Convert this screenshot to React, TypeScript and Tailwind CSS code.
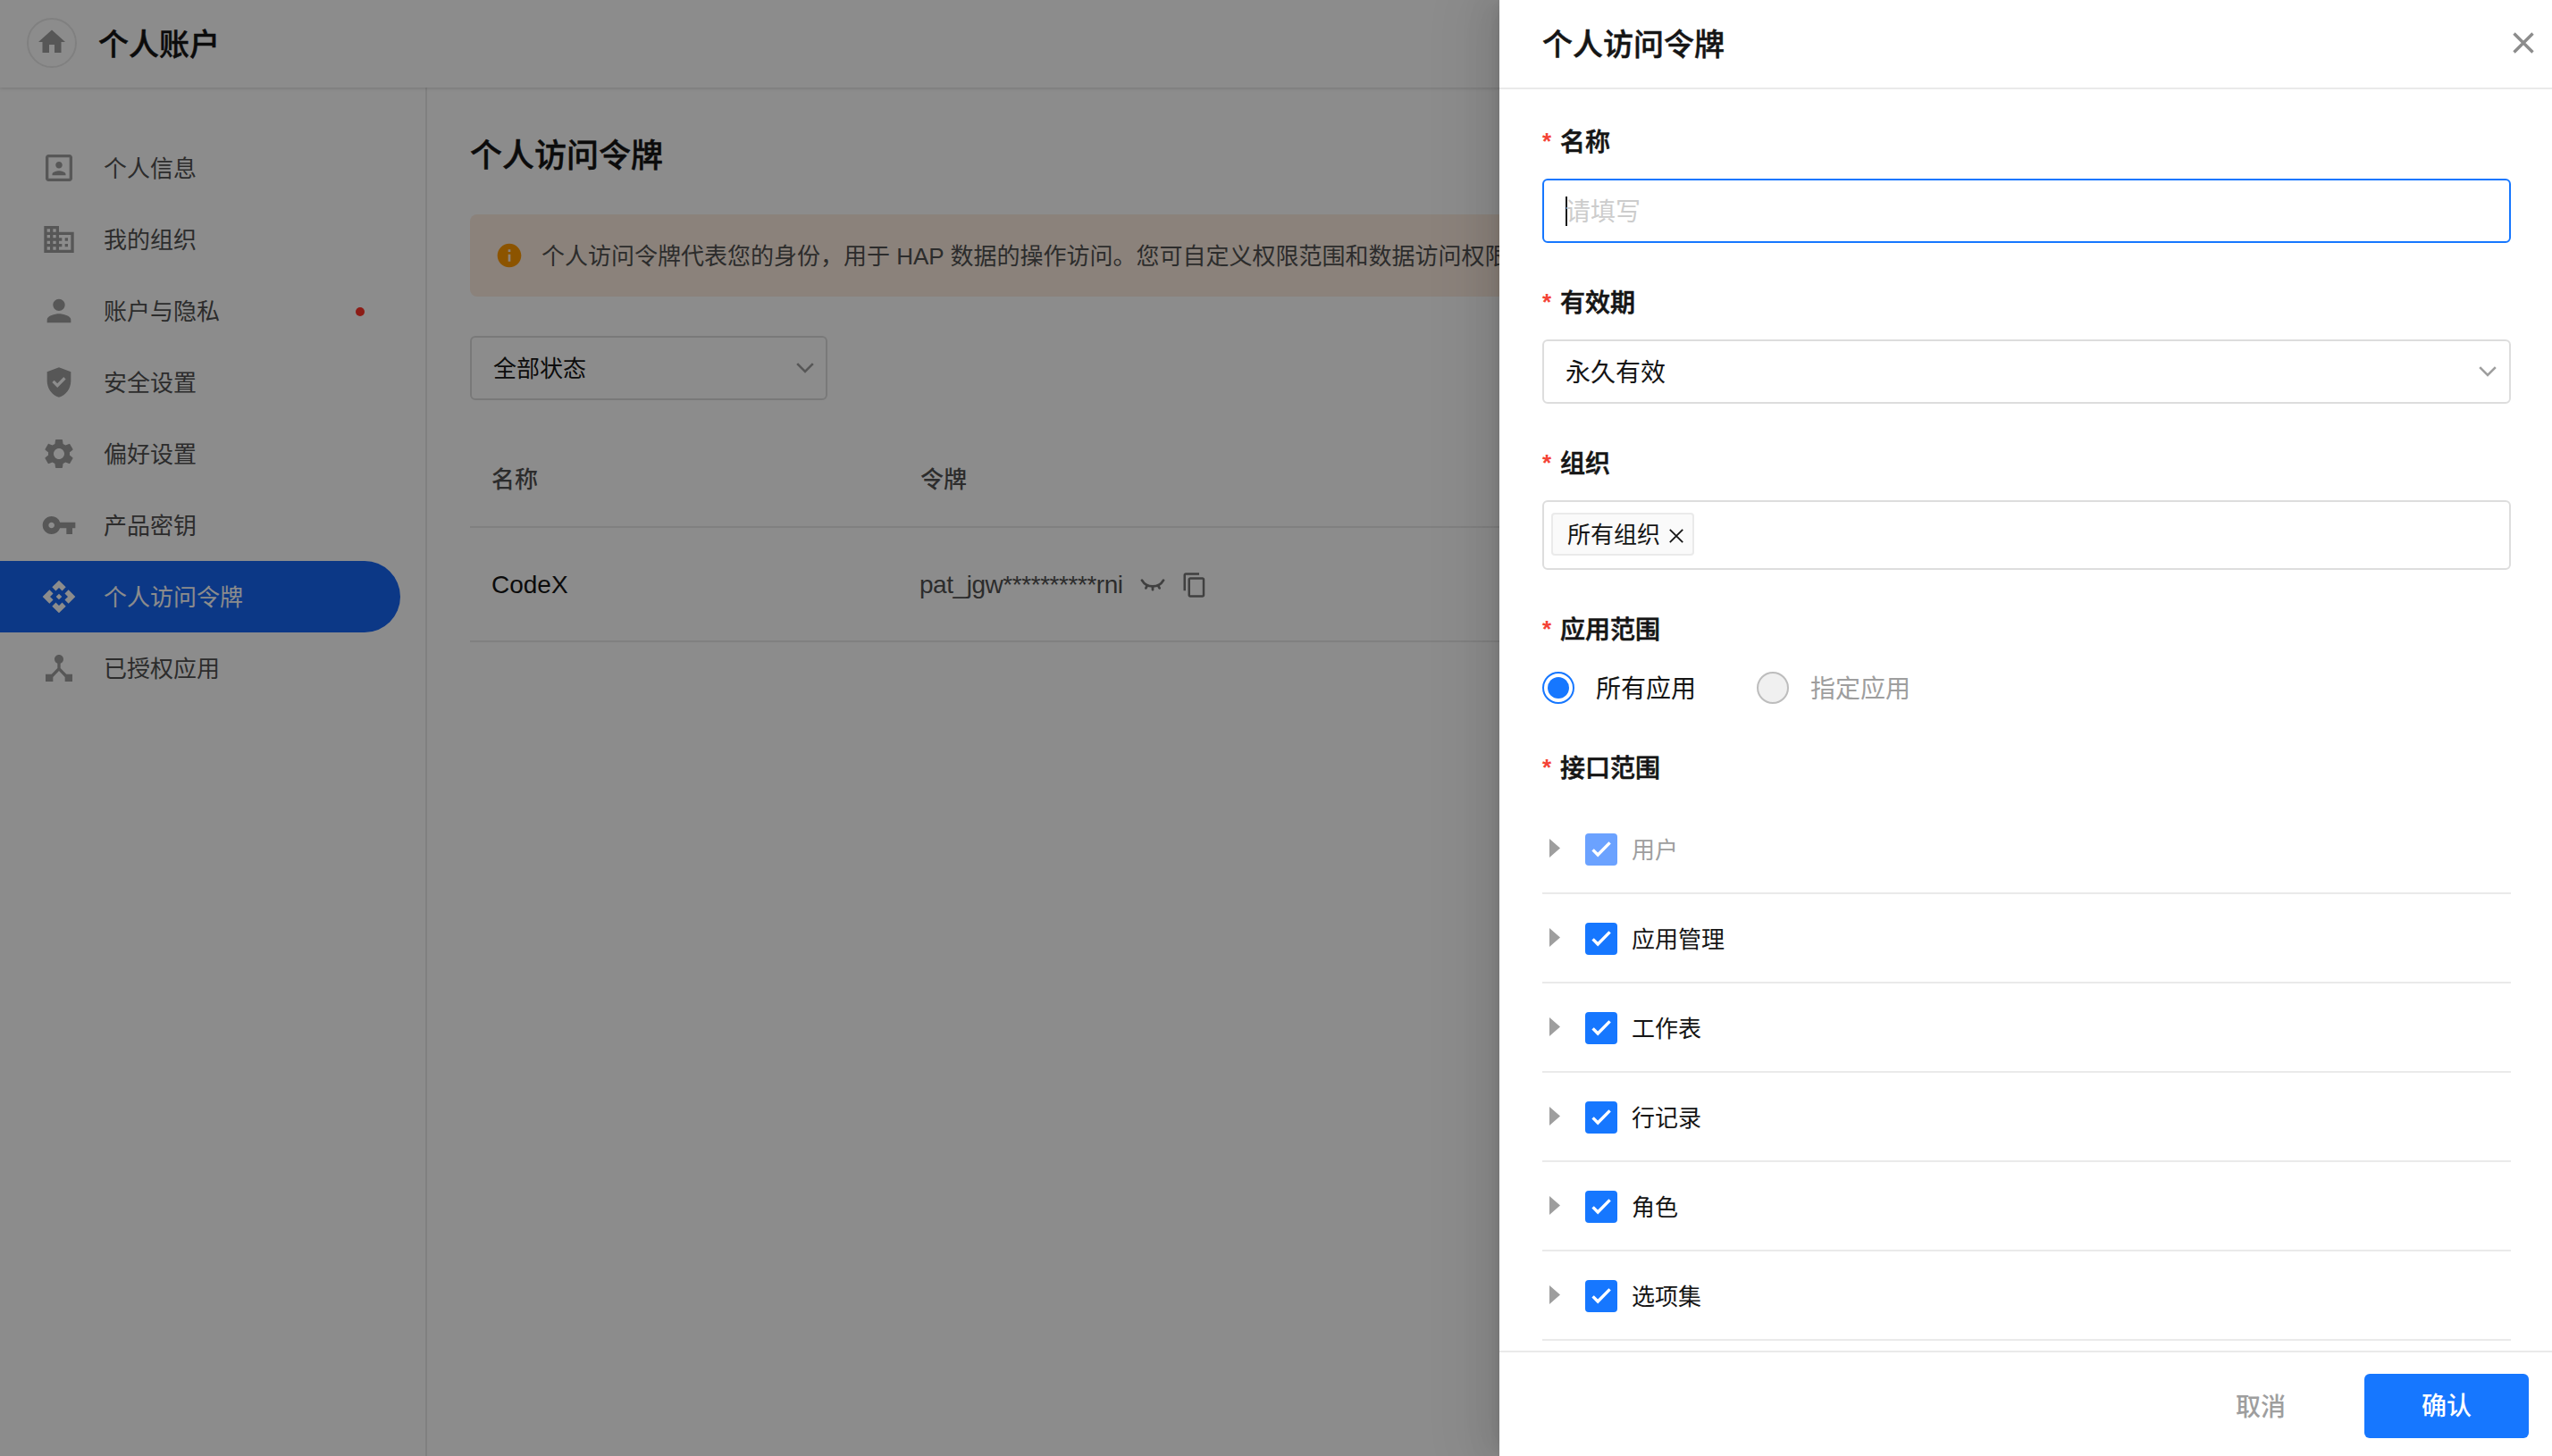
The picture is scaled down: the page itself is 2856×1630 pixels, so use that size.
import type { ReactNode } from 'react';
import {
  MdApi,
  MdContentCopy,
  MdDeviceHub,
  MdDomain,
  MdGppGood,
  MdHome,
  MdInfo,
  MdPerson,
  MdPortrait,
  MdSettings,
  MdVpnKey,
} from 'react-icons/md';
import type { IconType } from 'react-icons';

interface NavEntry {
  label: string;
  icon: IconType;
  active?: boolean;
  dot?: boolean;
}

const NAV: NavEntry[] = [
  { label: '个人信息', icon: MdPortrait },
  { label: '我的组织', icon: MdDomain },
  { label: '账户与隐私', icon: MdPerson, dot: true },
  { label: '安全设置', icon: MdGppGood },
  { label: '偏好设置', icon: MdSettings },
  { label: '产品密钥', icon: MdVpnKey },
  { label: '个人访问令牌', icon: MdApi, active: true },
  { label: '已授权应用', icon: MdDeviceHub },
];

const SCOPES = [
  { label: '用户', disabled: true },
  { label: '应用管理' },
  { label: '工作表' },
  { label: '行记录' },
  { label: '角色' },
  { label: '选项集' },
];

function Chevron() {
  return (
    <svg className="h-3 w-5" viewBox="0 0 20 12" fill="none" stroke="#9e9e9e" strokeWidth="2.6">
      <path d="M1.2 1.2 10 10 18.8 1.2" />
    </svg>
  );
}

function ClosedEye() {
  return (
    <svg className="h-[14px] w-7" viewBox="0 0 28 14" fill="none" stroke="#757575" strokeWidth="2.8" strokeLinecap="round">
      <path d="M2 1.6C4.5 6 9 8.4 14 8.4S23.5 6 26 1.6" />
      <path d="M14 8.6v3.6M8 7.4l-1.6 3M20 7.4l1.6 3" />
    </svg>
  );
}

function TopBar() {
  return (
    <header className="relative z-10 flex h-[98px] shrink-0 items-center bg-white pl-[30px] shadow-[0_1px_4px_rgba(0,0,0,0.16)]">
      <div className="mb-0.5 flex size-14 items-center justify-center rounded-full border-2 border-[#eaeaea]">
        <MdHome className="mb-[3px] size-9 text-[#9e9e9e]" />
      </div>
      <h1 className="ml-6 pt-px text-[34px] leading-none font-medium text-[#151515] [-webkit-text-stroke:0.5px]">
        个人账户
      </h1>
    </header>
  );
}

function SideNav() {
  return (
    <nav className="flex w-[478px] shrink-0 flex-col border-r-2 border-[#eaeaea] pt-[50px]">
      {NAV.map(({ label, icon: Icon, active, dot }) => (
        <div
          key={label}
          className={
            active
              ? 'flex h-20 w-[448px] items-center rounded-r-full bg-[#1666f5] pl-[46px] text-white'
              : 'flex h-20 w-[448px] items-center pl-[46px] text-[#515151]'
          }
        >
          <Icon className={active ? 'size-10 text-white' : 'size-10 text-[#9e9e9e]'} />
          <span className="ml-[30px] pt-0.5 text-[26px] leading-none">{label}</span>
          {dot && <span className="mt-0.5 mr-10 ml-auto size-2.5 rounded-full bg-[#ff3428]" />}
        </div>
      ))}
    </nav>
  );
}

function TokenPage() {
  return (
    <main className="min-w-0 flex-1 overflow-hidden px-12 pt-[59px]">
      <h2 className="text-[36px] leading-9 font-medium text-[#151515] [-webkit-text-stroke:0.5px]">个人访问令牌</h2>
      <div className="mt-[47px] flex h-[92px] items-center rounded-lg bg-[#fdede0] pl-7">
        <MdInfo className="size-8 text-[#ff9a00]" />
        <p className="ml-5 pt-0.5 text-[26px] leading-none whitespace-nowrap text-[#515151]">
          个人访问令牌代表您的身份，用于 HAP 数据的操作访问。您可自定义权限范围和数据访问权限，请妥善保管。
        </p>
      </div>
      <div className="mt-11 flex h-[72px] w-[400px] items-center justify-between rounded-md border-2 border-[#dddddd] pr-[13px] pl-6">
        <span className="pt-0.5 text-[26px] leading-none text-[#151515]">全部状态</span>
        <Chevron />
      </div>
      <div className="mt-[35px] grid h-[108px] grid-cols-[480px_1fr] items-center border-b-2 border-[#eaeaea] pt-px pl-6 text-[26px] leading-none font-medium text-[#515151]">
        <span>名称</span>
        <span>令牌</span>
      </div>
      <div className="grid h-32 grid-cols-[480px_1fr] items-center border-b-2 border-[#eaeaea] pt-px pl-6 text-[28px] leading-none">
        <span className="text-[#151515]">CodeX</span>
        <div className="flex items-center text-[#515151]">
          <span className="-ml-px tracking-[-0.45px]">pat_jgw**********rni</span>
          <span className="ml-[19px]">
            <ClosedEye />
          </span>
          <MdContentCopy className="ml-[18px] size-[30px] text-[#757575]" />
        </div>
      </div>
    </main>
  );
}

function FieldLabel({ children }: { children: ReactNode }) {
  return (
    <div className="flex h-8 items-center text-[28px] leading-none font-medium text-[#151515]">
      <span className="w-5 text-[26px] font-bold text-[#f44336]">*</span>
      <span className="pt-[3px] [-webkit-text-stroke:0.6px]">{children}</span>
    </div>
  );
}

function ScopeRow({ label, disabled }: { label: string; disabled?: boolean }) {
  return (
    <div className="flex h-[100px] items-center border-b-2 border-[#eaeaea] pl-2">
      <svg className="mb-0.5 h-[21px] w-3" viewBox="0 0 12 21" fill="#9e9e9e">
        <path d="M0 0 12 10.5 0 21z" />
      </svg>
      <span
        className={
          disabled
            ? 'mt-0.5 ml-7 flex size-9 items-center justify-center rounded bg-[#6ba2ff]'
            : 'mt-0.5 ml-7 flex size-9 items-center justify-center rounded bg-[#1677ff]'
        }
      >
        <svg className="size-9" viewBox="0 0 36 36" fill="none" stroke="#fff" strokeWidth="3.4">
          <path d="M8.6 18.4 14.2 24 27.6 10.4" />
        </svg>
      </span>
      <span
        className={
          disabled
            ? 'ml-4 pt-[3px] text-[26px] leading-none text-[#9e9e9e]'
            : 'ml-4 pt-[3px] text-[26px] leading-none text-[#151515]'
        }
      >
        {label}
      </span>
    </div>
  );
}

function TokenDrawer() {
  return (
    <aside className="absolute inset-y-0 right-0 flex w-[1178px] flex-col bg-white shadow-[-12px_0_32px_rgba(0,0,0,0.08),-6px_0_12px_-8px_rgba(0,0,0,0.12),-18px_0_56px_16px_rgba(0,0,0,0.05)]">
      <div className="flex h-[100px] shrink-0 items-center justify-between border-b-2 border-[#eaeaea] pr-5 pl-12">
        <h2 className="pt-px text-[34px] leading-none font-medium text-[#151515] [-webkit-text-stroke:0.5px]">
          个人访问令牌
        </h2>
        <svg className="mb-0.5 size-6" viewBox="0 0 24 24" fill="none" stroke="#8c8c8c" strokeWidth="3.4">
          <path d="M1.5 1.5 22.5 22.5M22.5 1.5 1.5 22.5" />
        </svg>
      </div>

      <div className="min-h-0 flex-1 overflow-hidden pt-[42px] pr-[46px] pl-12">
        <FieldLabel>名称</FieldLabel>
        <div className="mt-[26px] flex h-[72px] items-center rounded-md border-2 border-[#1677ff] pl-6 text-[28px] leading-none text-[#cccccc]">
          <span className="-mr-0.5 h-[33px] w-0.5 bg-[#151515]" />
          <span className="pt-[3px]">请填写</span>
        </div>

        <div className="mt-[50px]">
          <FieldLabel>有效期</FieldLabel>
        </div>
        <div className="mt-[26px] flex h-[72px] items-center justify-between rounded-md border-2 border-[#dddddd] pr-[14px] pl-6 text-[28px] leading-none text-[#151515]">
          <span className="pt-[3px]">永久有效</span>
          <Chevron />
        </div>

        <div className="mt-[50px]">
          <FieldLabel>组织</FieldLabel>
        </div>
        <div className="mt-[26px] flex h-[78px] items-start rounded-md border-2 border-[#dddddd] px-2 pt-3">
          <span className="flex h-12 w-40 items-center rounded border-2 border-[#eaeaea] bg-[#fafafa] pl-4 text-[26px] leading-none text-[#151515]">
            <span className="pt-px">所有组织</span>
            <svg className="mt-1 ml-2.5 size-4" viewBox="0 0 16 16" fill="none" stroke="#151515" strokeWidth="1.8">
              <path d="M.8.8 15.2 15.2M15.2.8.8 15.2" />
            </svg>
          </span>
        </div>

        <div className="mt-[50px]">
          <FieldLabel>应用范围</FieldLabel>
        </div>
        <div className="mt-8 flex h-9 items-center text-[28px] leading-none">
          <span className="flex size-9 items-center justify-center rounded-full border-2 border-[#1677ff]">
            <span className="size-6 rounded-full bg-[#1677ff]" />
          </span>
          <span className="ml-6 w-[180px] pt-[3px] text-[#151515]">所有应用</span>
          <span className="size-9 rounded-full border-2 border-[#bdbdbd] bg-[#f0f0f0]" />
          <span className="ml-6 pt-[3px] text-[#9e9e9e]">指定应用</span>
        </div>

        <div className="mt-[55px]">
          <FieldLabel>接口范围</FieldLabel>
        </div>
        <div className="mt-[26px]">
          {SCOPES.map((scope) => (
            <ScopeRow key={scope.label} label={scope.label} disabled={scope.disabled} />
          ))}
        </div>
      </div>

      <div className="flex h-[118px] shrink-0 items-start justify-end border-t-2 border-[#eaeaea] pt-6 pr-[26px] text-[28px] leading-none font-medium">
        <button className="mr-[88px] h-[72px] pt-[3px] text-[#9e9e9e]">取消</button>
        <button className="h-[72px] w-[184px] rounded-md bg-[#1677ff] pt-0.5 text-white">确认</button>
      </div>
    </aside>
  );
}

export default function App() {
  return (
    <div className="relative flex h-[1630px] w-[2856px] flex-col overflow-hidden bg-white font-['Liberation_Sans','Noto_Sans_CJK_SC',sans-serif]">
      <TopBar />
      <div className="flex min-h-0 flex-1">
        <SideNav />
        <TokenPage />
      </div>
      <div className="absolute inset-0 z-20 bg-black/45">
        <TokenDrawer />
      </div>
    </div>
  );
}
